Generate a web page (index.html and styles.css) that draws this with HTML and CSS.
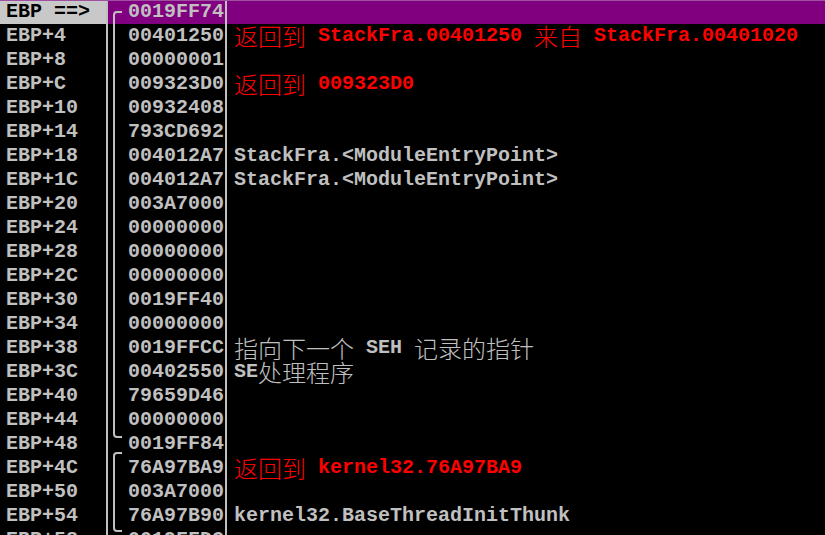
FILE: index.html
```html
<!DOCTYPE html>
<html lang="zh-CN">
<head>
  <meta charset="UTF-8">
  <title>堆栈</title>
  <meta name="viewport" content="width=device-width, initial-scale=1.0">
  <link rel="stylesheet" href="styles.css">
</head>
<body>

<!-- 堆栈窗口 -->
<div class="stack">
  <svg class="brackets" width="20" height="535" viewBox="0 0 20 535">
    <path d="M22 12 H17 Q14 12 14 15 V434 Q14 437 17 437 H22" />
    <path d="M22 453 H17 Q14 453 14 456 V528 Q14 531 17 531 H22" />
  </svg>

  <div class="row current"><div class="off">EBP ==&gt;</div><div class="val">0019FF74</div><div class="cmt"></div></div>
  <div class="row"><div class="off">EBP+4</div><div class="val">00401250</div><div class="cmt red"><span class="cjk">返回到</span> StackFra.00401250 <span class="cjk">来自</span> StackFra.00401020</div></div>
  <div class="row"><div class="off">EBP+8</div><div class="val">00000001</div><div class="cmt"></div></div>
  <div class="row"><div class="off">EBP+C</div><div class="val">009323D0</div><div class="cmt red"><span class="cjk">返回到</span> 009323D0</div></div>
  <div class="row"><div class="off">EBP+10</div><div class="val">00932408</div><div class="cmt"></div></div>
  <div class="row"><div class="off">EBP+14</div><div class="val">793CD692</div><div class="cmt"></div></div>
  <div class="row"><div class="off">EBP+18</div><div class="val">004012A7</div><div class="cmt">StackFra.&lt;ModuleEntryPoint&gt;</div></div>
  <div class="row"><div class="off">EBP+1C</div><div class="val">004012A7</div><div class="cmt">StackFra.&lt;ModuleEntryPoint&gt;</div></div>
  <div class="row"><div class="off">EBP+20</div><div class="val">003A7000</div><div class="cmt"></div></div>
  <div class="row"><div class="off">EBP+24</div><div class="val">00000000</div><div class="cmt"></div></div>
  <div class="row"><div class="off">EBP+28</div><div class="val">00000000</div><div class="cmt"></div></div>
  <div class="row"><div class="off">EBP+2C</div><div class="val">00000000</div><div class="cmt"></div></div>
  <div class="row"><div class="off">EBP+30</div><div class="val">0019FF40</div><div class="cmt"></div></div>
  <div class="row"><div class="off">EBP+34</div><div class="val">00000000</div><div class="cmt"></div></div>
  <div class="row"><div class="off">EBP+38</div><div class="val">0019FFCC</div><div class="cmt"><span class="cjk">指向下一个</span> SEH <span class="cjk">记录的指针</span></div></div>
  <div class="row"><div class="off">EBP+3C</div><div class="val">00402550</div><div class="cmt">SE<span class="cjk">处理程序</span></div></div>
  <div class="row"><div class="off">EBP+40</div><div class="val">79659D46</div><div class="cmt"></div></div>
  <div class="row"><div class="off">EBP+44</div><div class="val">00000000</div><div class="cmt"></div></div>
  <div class="row"><div class="off">EBP+48</div><div class="val">0019FF84</div><div class="cmt"></div></div>
  <div class="row"><div class="off">EBP+4C</div><div class="val">76A97BA9</div><div class="cmt red"><span class="cjk">返回到</span> kernel32.76A97BA9</div></div>
  <div class="row"><div class="off">EBP+50</div><div class="val">003A7000</div><div class="cmt"></div></div>
  <div class="row"><div class="off">EBP+54</div><div class="val">76A97B90</div><div class="cmt">kernel32.BaseThreadInitThunk</div></div>
  <div class="row"><div class="off">EBP+58</div><div class="val">0019FFDC</div><div class="cmt"></div></div>
</div>

</body>
</html>
```

FILE: styles.css
```css
    * {
      margin: 0;
      padding: 0;
      box-sizing: border-box;
    }

    html, body {
      height: 100%;
      overflow: hidden;
      background: #000;
    }

    .stack {
      position: relative;
      font-family: "Liberation Mono", "DejaVu Sans Mono", monospace;
      font-weight: bold;
      font-size: 20px;
      color: #c0c0c0;
    }

    /* 괄호 선 */
    .brackets {
      position: absolute;
      top: 0;
      left: 100px;
      overflow: visible;
    }

    .brackets path {
      fill: none;
      stroke: #c0c0c0;
      stroke-width: 2;
    }

    .row {
      display: grid;
      grid-template-columns: 108px 119px 1fr;
      height: 24px;
      line-height: 24px;
      white-space: pre;
      overflow: hidden;
    }

    .off {
      padding-left: 6px;
      border-right: 2px solid #c0c0c0;
    }

    .val {
      padding-left: 20px;
      border-right: 2px solid #c0c0c0;
    }

    .cmt {
      padding-left: 7px;
    }

    .red {
      color: #ff0000;
    }

    .cjk {
      font-family: "Noto Sans CJK SC", sans-serif;
      font-weight: 300;
      font-size: 24px;
      line-height: 24px;
      vertical-align: top;
    }

    .current {
      border-top: 1px solid #a050a0;
      line-height: 22px;
    }

    .current .off {
      background: #c8c8c8;
      color: #000;
    }

    .current .val,
    .current .cmt {
      background: #800080;
    }
```
